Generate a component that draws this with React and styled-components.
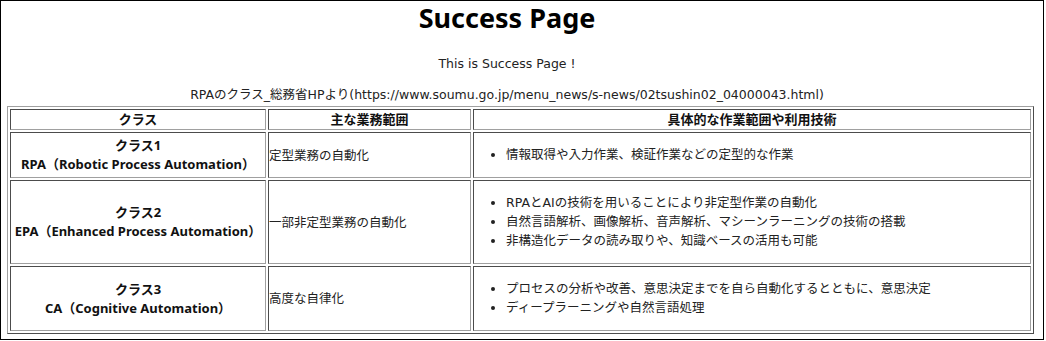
import React from "react";
import styled, { createGlobalStyle } from "styled-components";

const Global = createGlobalStyle`
  html, body { margin: 0; padding: 0; background: #fff; }
  body { font-family: "DejaVu Sans", "Noto Sans CJK JP", sans-serif; color: #222; }
`;

const Frame = styled.div`
  box-sizing: border-box;
  width: 1044px;
  height: 340px;
  border: 1px solid #000;
  padding: 0 9px 0 6px;
`;

const Header = styled.header`
  padding-right: 27px;
  text-align: center;
`;

const Title = styled.h1`
  margin: 0;
  padding-top: 2px;
  font-family: "Noto Sans", "Noto Sans CJK JP", sans-serif;
  font-size: 27px;
  line-height: 30px;
  font-weight: bold;
  color: #000;
`;

const Lead = styled.p`
  margin: 0;
  padding-top: 21px;
  font-size: 12.5px;
  line-height: 19px;
`;

const Source = styled.p`
  margin: 0;
  padding-top: 12px;
  font-size: 12.5px;
  line-height: 19px;
`;

const Table = styled.table`
  width: 1027px;
  margin-top: 2px;
  border-collapse: separate;
  border-spacing: 2px;
  border: 1px outset #a0a0a0;
  font-size: 12.5px;
  line-height: 19px;
`;

const HeadCell = styled.th`
  border: 1px inset #a0a0a0;
  padding: 1px;
  font-family: "Noto Sans", "Noto Sans CJK JP", sans-serif;
  font-size: 13px;
  line-height: 17px;
  font-weight: bold;
  color: #111;
  text-align: center;
  width: ${(p) => p.$w || "auto"};
`;

const ClassCell = styled.th`
  border: 1px inset #a0a0a0;
  padding: 1px;
  font-family: "Noto Sans", "Noto Sans CJK JP", sans-serif;
  font-size: 13px;
  line-height: 19px;
  font-weight: bold;
  color: #111;
  text-align: center;
  vertical-align: middle;
`;

const Cell = styled.td`
  border: 1px inset #a0a0a0;
  padding: 1px 1px 1px 0;
  text-align: left;
  vertical-align: middle;
`;

const List = styled.ul`
  margin: 11px 0 12px;
  padding-left: 32px;
  list-style: disc;
`;

const rows = [
  {
    cls: "クラス1",
    name: "RPA（Robotic Process Automation）",
    scope: "定型業務の自動化",
    items: ["情報取得や入力作業、検証作業などの定型的な作業"],
  },
  {
    cls: "クラス2",
    name: "EPA（Enhanced Process Automation）",
    scope: "一部非定型業務の自動化",
    items: [
      "RPAとAIの技術を用いることにより非定型作業の自動化",
      "自然言語解析、画像解析、音声解析、マシーンラーニングの技術の搭載",
      "非構造化データの読み取りや、知識ベースの活用も可能",
    ],
  },
  {
    cls: "クラス3",
    name: "CA（Cognitive Automation）",
    scope: "高度な自律化",
    items: [
      "プロセスの分析や改善、意思決定までを自ら自動化するとともに、意思決定",
      "ディープラーニングや自然言語処理",
    ],
  },
];

export default function App() {
  return (
    <>
      <Global />
      <Frame>
        <Header>
          <Title>Success Page</Title>
          <Lead>This is Success Page !</Lead>
          <Source>
            RPAのクラス_総務省HPより(https://www.soumu.go.jp/menu_news/s-news/02tsushin02_04000043.html)
          </Source>
        </Header>
        <Table>
          <thead>
            <tr>
              <HeadCell $w="252px">クラス</HeadCell>
              <HeadCell $w="199px">主な業務範囲</HeadCell>
              <HeadCell>具体的な作業範囲や利用技術</HeadCell>
            </tr>
          </thead>
          <tbody>
            {rows.map((r) => (
              <tr key={r.cls}>
                <ClassCell scope="row">
                  {r.cls}
                  <br />
                  {r.name}
                </ClassCell>
                <Cell>{r.scope}</Cell>
                <Cell>
                  <List>
                    {r.items.map((it) => (
                      <li key={it}>{it}</li>
                    ))}
                  </List>
                </Cell>
              </tr>
            ))}
          </tbody>
        </Table>
      </Frame>
    </>
  );
}
